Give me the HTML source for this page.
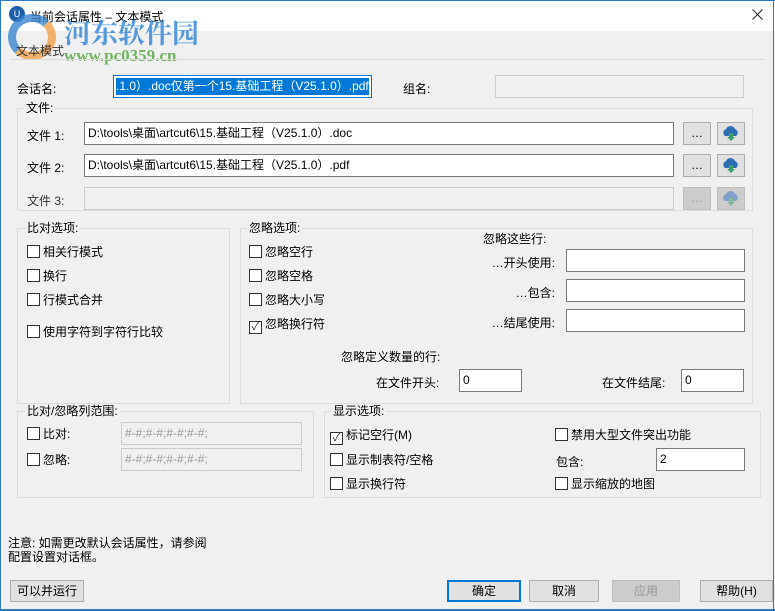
<!DOCTYPE html>
<html><head><meta charset="utf-8"><style>
*{box-sizing:border-box;margin:0;padding:0}
body{width:775px;height:611px;overflow:hidden;background:#f0f0f0;font-family:"Liberation Sans","Noto Sans CJK SC",sans-serif;font-size:12px;color:#000;position:relative}
.a{position:absolute;white-space:nowrap}
.inp{position:absolute;background:#fff;border:1px solid #7a7a7a;height:23px;padding:3px 3px;font-size:12px;line-height:15px;white-space:nowrap;overflow:hidden}
.dis{background:#f0f0f0;border-color:#cccccc;color:#a0a0a0}
.grp{position:absolute;border:1px solid #dcdcdc}
.gt{position:absolute;background:#f0f0f0;padding:0 2px;line-height:14px}
.cb{position:absolute;line-height:14px}
.cb i{display:inline-block;width:13px;height:13px;border:1px solid #333;background:#fff;vertical-align:-2px;margin-right:3px;position:relative}
.btn{position:absolute;height:22px;border:1px solid #adadad;background:#e1e1e1;text-align:center;line-height:20px}
</style></head><body>
<div class="a" style="left:0;top:0;width:775px;height:31px;background:#fff"></div>
<div class="a" style="left:0;top:0;width:1px;height:611px;background:#2b79c2"></div>
<div class="a" style="right:1px;top:0;width:1px;height:611px;background:#2b79c2"></div>
<div class="a" style="left:0;top:609px;width:775px;height:2px;background:#2b79c2"></div>
<div class="a" style="left:0;top:0;width:775px;height:1px;background:#2b79c2"></div>
<div class="a" style="left:9px;top:6px;width:16px;height:16px;border-radius:50%;background:#1d5fa8;color:#fff;font-size:9px;text-align:center;line-height:16px">U</div>
<div class="a" style="left:30px;top:8px;font-size:12px">当前会话属性 – 文本模式</div>
<svg class="a" style="left:752px;top:9px" width="11" height="11"><path d="M0.5 0.5L10.5 10.5M10.5 0.5L0.5 10.5" stroke="#222" stroke-width="1"/></svg>
<!-- watermark -->
<div class="a" style="left:8px;top:14px;width:48px;height:46px;border-radius:50%;border:8px solid #3a86d0;border-right-color:#f2a24a;border-bottom-color:#f2a24a;opacity:.8"></div>
<div class="a" style="left:64px;top:12px;font-size:27px;font-weight:bold;color:#3a8ad6;font-family:'Noto Serif CJK SC',serif;opacity:.85">河东软件园</div>
<div class="a" style="left:64px;top:46px;font-size:17px;font-weight:bold;color:#5aa845;font-family:'Liberation Serif',serif;opacity:.85">www.pc0359.cn</div>
<!-- tab -->
<div class="a" style="left:10px;top:59px;width:755px;height:1px;background:#d9d9d9"></div>
<div class="a" style="left:16px;top:42px;color:#333">文本模式</div>
<div class="a" style="left:17px;top:80px">会话名:</div>
<div class="inp" style="left:113px;top:75px;width:259px;border-color:#0078d7;padding:2px"><span style="background:#0078d7;color:#fff;display:block;height:17px;line-height:17px">.1.0）.doc仅第一个15.基础工程（V25.1.0）.pdf</span></div>
<div class="a" style="left:403px;top:80px">组名:</div>
<div class="inp dis" style="left:495px;top:75px;width:249px"></div>
<!-- files -->
<div class="grp" style="left:17px;top:108px;width:736px;height:103px"></div>
<div class="gt" style="left:24px;top:101px">文件:</div>
<div class="a" style="left:27px;top:127px">文件 1:</div>
<div class="inp" style="left:84px;top:122px;width:590px">D:\tools\桌面\artcut6\15.基础工程（V25.1.0）.doc</div>
<div class="a" style="left:27px;top:159px">文件 2:</div>
<div class="inp" style="left:84px;top:154px;width:590px">D:\tools\桌面\artcut6\15.基础工程（V25.1.0）.pdf</div>
<div class="a" style="left:27px;top:192px;color:#333">文件 3:</div>
<div class="inp dis" style="left:84px;top:187px;width:590px"></div>
<div class="btn" style="left:683px;top:122px;width:28px;height:23px">…</div>
<div class="btn" style="left:683px;top:154px;width:28px;height:23px">…</div>
<div class="btn" style="left:683px;top:187px;width:28px;height:23px;background:#ccc;border-color:#bfbfbf;color:#999">…</div>
<svg class="a" style="left:717px;top:122px" width="28" height="23"><rect x=".5" y=".5" width="27" height="22" fill="#e1e1e1" stroke="#adadad"/><path d="M8 14a4 4 0 0 1 1-7a5 5 0 0 1 9 0a4 4 0 0 1 1 7z" fill="#2e6db5"/><path d="M12 11h4v4h2l-4 4-4-4h2z" fill="#3aa06a"/></svg>
<svg class="a" style="left:717px;top:154px" width="28" height="23"><rect x=".5" y=".5" width="27" height="22" fill="#e1e1e1" stroke="#adadad"/><path d="M8 14a4 4 0 0 1 1-7a5 5 0 0 1 9 0a4 4 0 0 1 1 7z" fill="#2e6db5"/><path d="M12 11h4v4h2l-4 4-4-4h2z" fill="#3aa06a"/></svg>
<svg class="a" style="left:717px;top:187px" width="28" height="23"><rect x=".5" y=".5" width="27" height="22" fill="#ccc" stroke="#bfbfbf"/><path d="M8 14a4 4 0 0 1 1-7a5 5 0 0 1 9 0a4 4 0 0 1 1 7z" fill="#7d9fc8"/><path d="M12 11h4v4h2l-4 4-4-4h2z" fill="#86b89a"/></svg>
<!-- compare options -->
<div class="grp" style="left:17px;top:228px;width:213px;height:176px"></div>
<div class="gt" style="left:25px;top:221px">比对选项:</div>
<div class="cb" style="left:27px;top:245px"><i></i>相关行模式</div>
<div class="cb" style="left:27px;top:269px"><i></i>换行</div>
<div class="cb" style="left:27px;top:293px"><i></i>行模式合并</div>
<div class="cb" style="left:27px;top:325px"><i></i>使用字符到字符行比较</div>
<!-- ignore -->
<div class="grp" style="left:240px;top:228px;width:513px;height:176px"></div>
<div class="gt" style="left:247px;top:221px">忽略选项:</div>
<div class="cb" style="left:249px;top:245px"><i></i>忽略空行</div>
<div class="cb" style="left:249px;top:269px"><i></i>忽略空格</div>
<div class="cb" style="left:249px;top:293px"><i></i>忽略大小写</div>
<div class="cb" style="left:249px;top:317px"><i style="color:#333;font-style:normal;font-size:11px;line-height:11px;text-align:center">✓</i>忽略换行符</div>
<div class="a" style="left:483px;top:230px">忽略这些行:</div>
<div class="a" style="left:480px;top:254px;width:75px;text-align:right">…开头使用:</div>
<div class="inp" style="left:566px;top:249px;width:179px"></div>
<div class="a" style="left:480px;top:284px;width:75px;text-align:right">…包含:</div>
<div class="inp" style="left:566px;top:279px;width:179px"></div>
<div class="a" style="left:480px;top:314px;width:75px;text-align:right">…结尾使用:</div>
<div class="inp" style="left:566px;top:309px;width:179px"></div>
<div class="a" style="left:341px;top:348px">忽略定义数量的行:</div>
<div class="a" style="left:376px;top:374px">在文件开头:</div>
<div class="inp" style="left:459px;top:369px;width:63px">0</div>
<div class="a" style="left:602px;top:374px">在文件结尾:</div>
<div class="inp" style="left:681px;top:369px;width:63px">0</div>
<!-- range -->
<div class="grp" style="left:17px;top:411px;width:297px;height:87px"></div>
<div class="gt" style="left:25px;top:404px">比对/忽略列范围:</div>
<div class="cb" style="left:27px;top:427px"><i></i>比对:</div>
<div class="inp dis" style="left:121px;top:422px;width:181px;color:#999">#-#;#-#;#-#;#-#;</div>
<div class="cb" style="left:27px;top:453px"><i></i>忽略:</div>
<div class="inp dis" style="left:121px;top:448px;width:181px;color:#999">#-#;#-#;#-#;#-#;</div>
<!-- display -->
<div class="grp" style="left:324px;top:411px;width:437px;height:87px"></div>
<div class="gt" style="left:331px;top:404px">显示选项:</div>
<div class="cb" style="left:330px;top:428px"><i style="color:#333;font-style:normal;font-size:11px;line-height:11px;text-align:center">✓</i>标记空行(M)</div>
<div class="cb" style="left:330px;top:453px"><i></i>显示制表符/空格</div>
<div class="cb" style="left:330px;top:477px"><i></i>显示换行符</div>
<div class="cb" style="left:555px;top:428px"><i></i>禁用大型文件突出功能</div>
<div class="a" style="left:556px;top:453px">包含:</div>
<div class="inp" style="left:656px;top:448px;width:89px">2</div>
<div class="cb" style="left:555px;top:477px"><i></i>显示缩放的地图</div>
<div class="a" style="left:8px;top:536px;line-height:14px">注意: 如需更改默认会话属性，请参阅<br>配置设置对话框。</div>
<div class="btn" style="left:10px;top:580px;width:74px">可以并运行</div>
<div class="btn" style="left:447px;top:580px;width:74px;border:2px solid #0078d7;line-height:18px">确定</div>
<div class="btn" style="left:529px;top:580px;width:70px">取消</div>
<div class="btn" style="left:612px;top:580px;width:68px;background:#ccc;border-color:#bfbfbf;color:#999">应用</div>
<div class="btn" style="left:700px;top:580px;width:73px">帮助(H)</div>
</body></html>
